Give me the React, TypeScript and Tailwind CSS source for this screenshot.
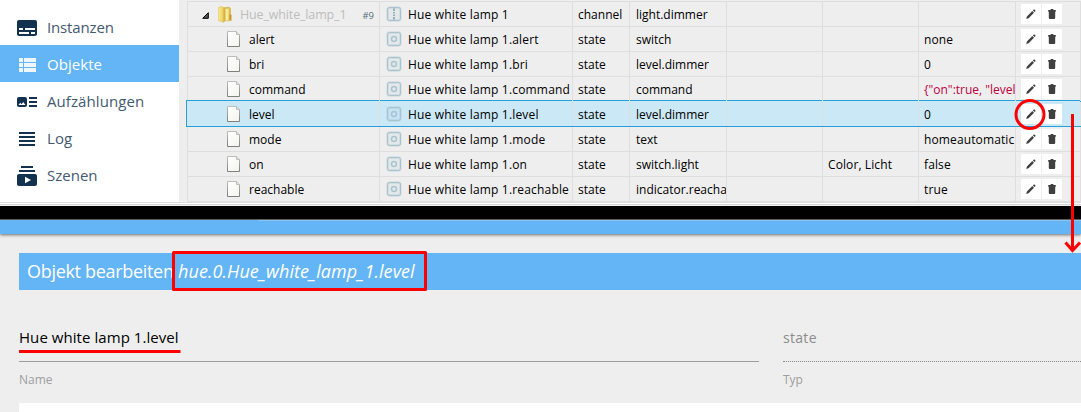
import React from 'react';

const navItems = [
  { label: 'Instanzen', d: 'M20 4H4c-1.1 0-2 .9-2 2v12c0 1.1.9 2 2 2h16c1.1 0 2-.9 2-2V6c0-1.1-.9-2-2-2zM4 12h4v2H4v-2zm10 6H4v-2h10v2zm6 0h-4v-2h4v2zm0-4H10v-2h10v2z', spacing: 'tracking-[-0.15px]' },
  { label: 'Objekte', active: true, d: 'M4 14h4v-4H4v4zm0 5h4v-4H4v4zM4 9h4V5H4v4zm5 5h12v-4H9v4zm0 5h12v-4H9v4zM9 5v4h12V5H9z', spacing: 'tracking-[0.05px]' },
  { label: 'Aufzählungen', d: 'M22 13h-8v-2h8v2zm0-6h-8v2h8V7zm-8 10h8v-2h-8v2zm-2-8v6c0 1.1-.9 2-2 2H4c-1.1 0-2-.9-2-2V9c0-1.1.9-2 2-2h6c1.1 0 2 .9 2 2zm-1.5 6l-2.25-3-1.75 2.26-1.25-1.51L3.5 15h7z', spacing: 'tracking-[0.08px]' },
  { label: 'Log', d: 'M4 15h16v-2H4v2zm0 4h16v-2H4v2zm0-8h16V9H4v2zm0-6v2h16V5H4z', spacing: 'tracking-[0.1px]' },
  { label: 'Szenen', d: 'M20 8H4V6h16v2zm-2-6H6v2h12V2zm4 10v8c0 1.1-.9 2-2 2H4c-1.1 0-2-.9-2-2v-8c0-1.1.9-2 2-2h16c1.1 0 2 .9 2 2zm-6 4l-6-3.27v6.53L16 16z', spacing: 'tracking-[0px]' },
];

type Row = { id: string; name: string; type: string; role: string; func?: string; value?: string; folder?: boolean; selected?: boolean; json?: boolean };

const rows: Row[] = [
  { id: 'Hue_white_lamp_1', name: 'Hue white lamp 1', type: 'channel', role: 'light.dimmer', folder: true },
  { id: 'alert', name: 'Hue white lamp 1.alert', type: 'state', role: 'switch', value: 'none' },
  { id: 'bri', name: 'Hue white lamp 1.bri', type: 'state', role: 'level.dimmer', value: '0' },
  { id: 'command', name: 'Hue white lamp 1.command', type: 'state', role: 'command', value: '{"on":true, "level', json: true },
  { id: 'level', name: 'Hue white lamp 1.level', type: 'state', role: 'level.dimmer', value: '0', selected: true },
  { id: 'mode', name: 'Hue white lamp 1.mode', type: 'state', role: 'text', value: 'homeautomatic' },
  { id: 'on', name: 'Hue white lamp 1.on', type: 'state', role: 'switch.light', func: 'Color, Licht', value: 'false' },
  { id: 'reachable', name: 'Hue white lamp 1.reachable', type: 'state', role: 'indicator.reacha', value: 'true' },
];

function PageIcon() {
  return (
    <svg width="14" height="17" viewBox="0 0 14 17" className="shrink-0">
      <defs>
        <linearGradient id="page" x1="0" y1="0" x2="1" y2="1">
          <stop offset="0" stopColor="#ffffff" />
          <stop offset="1" stopColor="#f3f4ee" />
        </linearGradient>
        <linearGradient id="edge" x1="0" y1="0" x2="0" y2="1">
          <stop offset="0" stopColor="#bdbdb9" />
          <stop offset="1" stopColor="#80807a" />
        </linearGradient>
      </defs>
      <path d="M.5 .5H9.5L12.500 3.500V15.500H.5Z" fill="url(#page)" stroke="url(#edge)" />
      <path d="M9.500 .5V3.500H12.500" fill="#e4e4e0" stroke="#bdbdb9" />
    </svg>
  );
}

function FolderIcon() {
  return (
    <svg width="14" height="17" viewBox="0 0 14 17" className="shrink-0">
      <defs>
        <linearGradient id="gold" x1="0" y1="0" x2="1" y2="0">
          <stop offset="0" stopColor="#f8e996" />
          <stop offset=".6" stopColor="#efd564" />
          <stop offset="1" stopColor="#caa23c" />
        </linearGradient>
      </defs>
      <path d="M5 2L11 1L12.500 2.500V8L13.300 9V14.500L5 15Z" fill="#e0bd4f" stroke="#d1ae49" strokeWidth=".6" />
      <path d="M7.500 3L10.500 2.500V14L7.500 15Z" fill="#f9eb9a" />
      <path d="M.4 1.500L3 .5L7 2V15L5.500 16.300L.4 14.500Z" fill="url(#gold)" stroke="#dcc263" strokeWidth=".6" />
      <path d="M11.500 8.500H13V14H11.500Z" fill="#c69330" />
    </svg>
  );
}

function ObjectIcon({ channel }: { channel?: boolean }) {
  return (
    <svg width="16" height="16" viewBox="0 0 16 16" className="shrink-0">
      <rect x="1.500" y="1.500" width="13" height="13" rx="2" fill="#8fb6c9" fillOpacity=".1" stroke="#7dafc2" strokeOpacity=".22" strokeWidth="2.400" />
      <rect x="1.500" y="1.500" width="13" height="13" rx="2" fill="none" stroke="#a9c3ce" strokeWidth="1" />
      {channel ? (
        <path d="M8 2.500V5M8 11V13.500M8 6V7.400M8 8.600V10" stroke="#8fb2c1" strokeWidth="2" />
      ) : (
        <circle cx="8" cy="8" r="2.500" fill="none" stroke="#a9c5d1" strokeWidth="1.500" />
      )}
    </svg>
  );
}

function Actions() {
  return (
    <div className="flex gap-px pl-[5px] pt-[2px]">
      <div className="h-5 w-5 bg-white">
        <svg width="20" height="20" viewBox="0 0 20 20" fill="#404040">
          <path d="M5.200 15L5.900 12.500L11.300 7.100L13 8.800L7.600 14.200ZM11.900 6.500L12.800 5.600Q13.200 5.300 13.600 5.600L14.400 6.400Q14.800 6.800 14.400 7.300L13.600 8.100Z" />
        </svg>
      </div>
      <div className="h-5 w-5 bg-white">
        <svg width="20" height="20" viewBox="0 0 20 20" fill="#404040">
          <path d="M6.200 6H8.300L9 5H11L11.700 6H13.800V7.700H6.200ZM6.800 7.500H13.200V14Q13.200 15 12.200 15H7.800Q6.800 15 6.800 14Z" />
        </svg>
      </div>
    </div>
  );
}

function ObjectRow({ row }: { row: Row }) {
  const cell = 'h-full overflow-hidden whitespace-nowrap border-r border-[#dedede] leading-[26px]';
  return (
    <div
      className={
        row.selected
          ? '-mt-[2px] ml-[-1px] flex h-[27px] w-[895px] border border-[#26a0da] bg-[#cbe8f6] pt-px'
          : 'flex h-[25px] border-b border-l border-[#dedede]'
      }
    >
      <div className={`flex h-full shrink-0 items-center border-r border-[#dedede] ${row.selected ? 'w-[193px]' : 'w-[192px]'}`}>
        {row.folder ? (
          <div className="flex w-full items-center pl-[14px]">
            <svg width="7" height="7" viewBox="0 0 7 7" className="mt-[2px]"><path d="M6.300 .7V6.300H.7Z" fill="#555" stroke="#000" /></svg>
            <span className="ml-[9px] flex"><FolderIcon /></span>
            <span className="ml-[8px] pt-[2px] text-[12.5px] tracking-[-0.15px] text-[#bdbdbd]">Hue_white_lamp_1</span>
            <span className="ml-auto mr-[5px] pt-[4px] text-[9.5px] text-[#546e7a]">#9</span>
          </div>
        ) : (
          <div className={`flex items-center ${row.selected ? 'pl-[40px]' : 'pl-[39px]'}`}>
            <PageIcon />
            <span className="ml-[8px] pt-[2px]">{row.id}</span>
          </div>
        )}
      </div>
      <div className={`${cell} flex w-[193px] shrink-0 items-center pl-[6px]`}>
        <ObjectIcon channel={row.folder} />
        <span className="ml-[6px] pt-[2px] tracking-[0.18px]">{row.name}</span>
      </div>
      <div className={`${cell} w-[57px] shrink-0 pl-[5px]`}>{row.type}</div>
      <div className={`${cell} w-[97px] shrink-0 pl-[6px]`}>{row.role}</div>
      <div className={`${cell} w-[96px] shrink-0 pl-[5px]`} />
      <div className={`${cell} w-[96px] shrink-0 pl-[5px] tracking-[0.1px]`}>{row.func}</div>
      <div className={`${cell} w-[97px] shrink-0 pl-[5px] ${row.json ? 'text-[#c00040]' : 'tracking-[0.12px]'}`}>{row.value}</div>
      <div className="w-[65px] shrink-0 border-r border-[#dedede]"><Actions /></div>
    </div>
  );
}

export default function App() {
  return (
    <div className="relative flex h-[412px] w-[1081px] flex-col overflow-hidden bg-[#eeeeee] font-['Open_Sans','Noto_Sans',sans-serif] text-black">
      <div className="flex h-[202px] shrink-0">
        <nav className="w-[179px] shrink-0 bg-white pt-[8px]">
          {navItems.map((item) => (
            <div key={item.label} className={`flex h-[37px] pl-[15px] ${item.active ? 'bg-[#64b5f6] text-white' : 'text-[#445a70]'}`}>
              <svg width="24" height="24" viewBox="0 0 24 24" className={item.active ? 'mt-[8px] fill-[#eef7ff]' : 'mt-[8px] fill-[#133250]'}>
                <path d={item.d} />
              </svg>
              <span className={`ml-[8px] text-[15px] leading-[38px] ${item.spacing}`}>{item.label}</span>
            </div>
          ))}
        </nav>
        <main className="ml-[8px] w-[894px] pt-px text-[12px]">
          <div className="h-px bg-[#dedede]" />
          {rows.map((row) => <ObjectRow key={row.id} row={row} />)}
        </main>
      </div>
      <div className="h-px shrink-0 bg-[#dedede]" />
      <div className="h-px shrink-0 bg-white" />
      <div className="h-px shrink-0 bg-[#d5d5d5]" />
      <div className="h-px shrink-0 bg-[#f2f2f2]" />
      <div className="h-[13px] shrink-0 bg-black" />
      <div className="h-px shrink-0 bg-[#6b655f]" />
      <div className="h-[14px] shrink-0 bg-[#64b5f6] shadow-[0_1px_3px_rgba(0,0,0,0.55)]">
        <div className="ml-[258px] h-px bg-[#87c5f8]" />
      </div>
      <section className="flex flex-1 flex-col pl-[19px] pt-[19px]">
        <h1 className="h-[37px] shrink-0 whitespace-nowrap bg-[#64b5f6] pl-[8px] text-[18px] leading-[37px] text-white">
          <span className="tracking-[-0.31px]">Objekt bearbeiten </span><i className="tracking-[0.07px]">hue.0.Hue_white_lamp_1.level</i>
        </h1>
        <div className="flex gap-[24px] pt-[29px]">
          <div className="w-[740px]">
            <div className="h-[43px] border-b border-[#9e9e9e] text-[15px] leading-[37px] tracking-[0.06px]">Hue white lamp 1.level</div>
            <div className="pt-[8px] text-[12px] leading-[20px] text-[#9e9e9e]">Name</div>
          </div>
          <div className="w-[298px]">
            <div className="h-[43px] border-b border-dotted border-[#8a8a8a] text-[14px] leading-[38px] tracking-[0.3px] text-[#8c8c8c]">state</div>
            <div className="pt-[8px] text-[12px] leading-[20px] text-[#9e9e9e]">Typ</div>
          </div>
        </div>
        <div className="mt-[13px] h-[20px] shrink-0 bg-white" />
      </section>
      <svg width="1081" height="412" viewBox="0 0 1081 412" className="pointer-events-none absolute left-0 top-0" fill="none" stroke="#ff0000" strokeWidth="3">
        <ellipse cx="1030" cy="114.500" rx="14" ry="14" />
        <path d="M1072.500 114V251M1065.500 242.500L1072.500 250.500L1080 242.500" />
        <rect x="173.500" y="252.500" width="252" height="37" strokeLinejoin="round" />
        <path d="M19 351.500H180.500" />
      </svg>
    </div>
  );
}
